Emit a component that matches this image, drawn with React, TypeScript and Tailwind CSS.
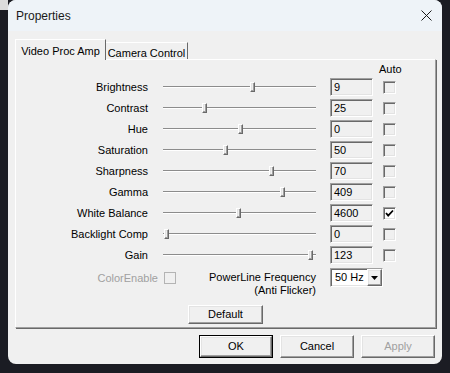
import React from "react";

interface SliderRow {
  label: string;
  value: string;
  pos: number;
  auto?: boolean;
}

const rows: SliderRow[] = [
  { label: "Brightness", value: "9", pos: 89 },
  { label: "Contrast", value: "25", pos: 41 },
  { label: "Hue", value: "0", pos: 77 },
  { label: "Saturation", value: "50", pos: 62 },
  { label: "Sharpness", value: "70", pos: 108 },
  { label: "Gamma", value: "409", pos: 119 },
  { label: "White Balance", value: "4600", pos: 75, auto: true },
  { label: "Backlight Comp", value: "0", pos: 3 },
  { label: "Gain", value: "123", pos: 147 },
];

// classic win32 3D edges
const sunken =
  "border border-t-[#a0a0a0] border-l-[#a0a0a0] border-r-white border-b-white shadow-[inset_1px_1px_0_#696969,inset_-1px_-1px_0_#e3e3e3]";
const raised =
  "border border-t-white border-l-white border-r-[#696969] border-b-[#696969] shadow-[inset_-1px_-1px_0_#a0a0a0,inset_1px_1px_0_#e3e3e3]";

const Checkbox: React.FC<{ checked?: boolean }> = ({ checked }) => (
  <div className={`w-[13px] h-[13px] ${sunken} ${checked ? "bg-white" : "bg-[#f0f0f0]"} flex items-center justify-center`}>
    {checked && (
      <svg width="9" height="9" viewBox="0 0 9 9">
        <polyline points="1,4 3.2,6.6 8,1.5" fill="none" stroke="#000" strokeWidth="1.8" />
      </svg>
    )}
  </div>
);

const Slider: React.FC<{ pos: number }> = ({ pos }) => (
  <div className="relative w-[153px] h-[18px] flex items-center">
    <div className="w-full h-[1px] bg-[#8c8c8c] border-b border-white box-content" />
    <div
      className={`absolute top-[4px] w-[5px] h-[10px] bg-[#f0f0f0] ${raised}`}
      style={{ left: pos - 2 }}
    />
  </div>
);

const Button: React.FC<{ children: React.ReactNode; className?: string; disabled?: boolean }> = ({
  children,
  className = "",
  disabled,
}) => (
  <div
    className={`flex items-center justify-center bg-[#f0f0f0] ${raised} ${disabled ? "text-[#a0a0a0]" : "text-black"} ${className}`}
  >
    {children}
  </div>
);

export default function App() {
  return (
    <div className="relative w-[450px] h-[373px] bg-[#1b1c23] overflow-hidden font-['Liberation_Sans',Arial,sans-serif] text-[11px] text-black">
      <div className="absolute left-0 top-0 w-[8px] h-[10px] bg-[#dcdcdc]" />
      <div className="relative ml-[8px] w-[434px] h-[364px] rounded-[8px] bg-[#f0f0f0] overflow-hidden flex flex-col">
        {/* title bar */}
        <div className="h-[31px] bg-[#eef3f8] flex items-center justify-between pl-[8px] pr-[10px]">
          <span className="text-[12px] text-[#1a1a1a]">Properties</span>
          <svg width="11" height="11" viewBox="0 0 11 11">
            <path d="M0.5 0.5 L10.5 10.5 M10.5 0.5 L0.5 10.5" stroke="#1a1a1a" strokeWidth="1" />
          </svg>
        </div>

        {/* tabs */}
        <div className="mt-[8px] ml-[7px] h-[20px] flex items-end">
          <div className="relative z-10 h-[21px] -mb-[1px] w-[91px] bg-[#f0f0f0] border-t border-l border-white border-r border-r-[#696969] flex items-start justify-center pt-[3px]">
            Video Proc Amp
          </div>
          <div className="h-[17px] w-[82px] bg-[#f0f0f0] border-t border-white border-r border-r-[#696969] flex items-start justify-center pt-[2px]">
            Camera Control
          </div>
        </div>

        {/* tab panel */}
        <div className="ml-[7px] w-[421px] h-[269px] border-t border-l border-white border-r border-r-[#a0a0a0] border-b border-b-[#a0a0a0] shadow-[1px_1px_0_#696969] flex flex-col">
          <div className="h-[18px] flex items-center pl-[363px]">Auto</div>
          <div className="flex flex-col gap-[3px]">
            {rows.map((r) => (
              <div key={r.label} className="h-[18px] flex items-center">
                <div className="w-[132px] text-right">{r.label}</div>
                <div className="ml-[15px]">
                  <Slider pos={r.pos} />
                </div>
                <div className={`ml-[14px] w-[43px] h-[18px] ${sunken} bg-[#f0f0f0] flex items-center pl-[3px]`}>
                  {r.value}
                </div>
                <div className="ml-[10px]">
                  <Checkbox checked={r.auto} />
                </div>
              </div>
            ))}
          </div>

          <div className="mt-[4px] h-[30px] flex items-start">
            <div className="w-[160px] flex justify-end items-center gap-[6px] pt-[2px]">
              <span className="text-[#a0a0a0]">ColorEnable</span>
              <div className="w-[12px] h-[12px] border border-[#b4b4b4] bg-[#f0f0f0]" />
            </div>
            <div className="w-[140px] text-right leading-[13px] pt-[3px]">
              PowerLine Frequency
              <br />
              (Anti Flicker)
            </div>
            <div className={`ml-[14px] w-[53px] h-[19px] ${sunken} bg-white flex items-stretch`}>
              <div className="flex-1 flex items-center pl-[4px]">50 Hz</div>
              <div className={`w-[15px] bg-[#f0f0f0] ${raised} flex items-center justify-center`}>
                <svg width="7" height="4" viewBox="0 0 7 4">
                  <path d="M0 0 L7 0 L3.5 4 Z" fill="#000" />
                </svg>
              </div>
            </div>
          </div>

          <Button className="mt-[7px] mx-auto w-[75px] h-[19px]">Default</Button>
        </div>

        {/* dialog buttons */}
        <div className="mt-[7px] pr-[7px] flex justify-end gap-[7px]">
          <div className="w-[74px] h-[23px] border border-black">
            <Button className="w-full h-full">OK</Button>
          </div>
          <Button className="w-[74px] h-[23px]">Cancel</Button>
          <Button className="w-[74px] h-[23px]" disabled>
            Apply
          </Button>
        </div>
      </div>
    </div>
  );
}
